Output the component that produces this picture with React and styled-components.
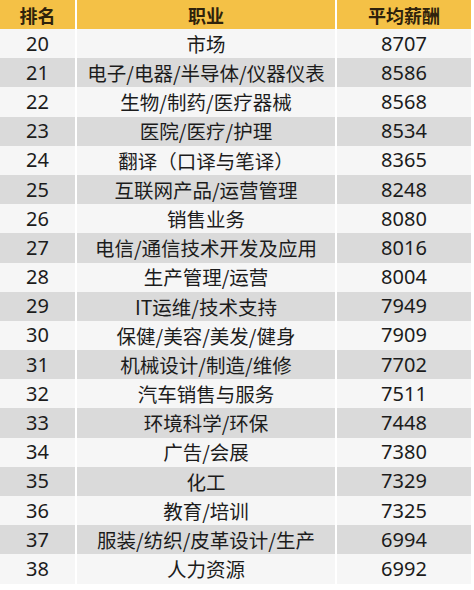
import styled, { createGlobalStyle } from "styled-components"

const GlobalStyle = createGlobalStyle`
  html, body {
    margin: 0;
    padding: 0;
    background: #ffffff;
  }
  body {
    font-family: "Noto Sans", "Noto Sans CJK SC", sans-serif;
    color: #1c1c1c;
  }
`

const rows = [
  ['20', '市场', '8707'],
  ['21', '电子/电器/半导体/仪器仪表', '8586'],
  ['22', '生物/制药/医疗器械', '8568'],
  ['23', '医院/医疗/护理', '8534'],
  ['24', '翻译（口译与笔译）', '8365'],
  ['25', '互联网产品/运营管理', '8248'],
  ['26', '销售业务', '8080'],
  ['27', '电信/通信技术开发及应用', '8016'],
  ['28', '生产管理/运营', '8004'],
  ['29', 'IT运维/技术支持', '7949'],
  ['30', '保健/美容/美发/健身', '7909'],
  ['31', '机械设计/制造/维修', '7702'],
  ['32', '汽车销售与服务', '7511'],
  ['33', '环境科学/环保', '7448'],
  ['34', '广告/会展', '7380'],
  ['35', '化工', '7329'],
  ['36', '教育/培训', '7325'],
  ['37', '服装/纺织/皮革设计/生产', '6994'],
  ['38', '人力资源', '6992'],
]

const Table = styled.div`
  width: 471px;
  display: flex;
  flex-direction: column;
`

const Row = styled.div`
  display: grid;
  grid-template-columns: 75px 258px 1fr;
  column-gap: 2px;
  height: ${p => (p.$head ? '29px' : '29.2px')};
  background: #ffffff;
`

const Cell = styled.div`
  display: flex;
  align-items: center;
  justify-content: center;
  background: ${p => (p.$head ? '#f4c146' : p.$alt ? '#dadada' : '#f6f6f6')};
  font-family: ${p => (p.$num ? '"Noto Sans", sans-serif' : '"Noto Sans CJK SC", sans-serif')};
  font-size: ${p => (p.$head ? '18px' : p.$num ? '20px' : '19.5px')};
  font-weight: ${p => (p.$head ? 700 : 400)};
  color: ${p => (p.$head ? '#2e220c' : '#1c1c1c')};
  white-space: nowrap;
  line-height: 1;
`

export default function App() {
  return (
    <>
      <GlobalStyle />
      <Table>
        <Row $head>
          <Cell $head>排名</Cell>
          <Cell $head>职业</Cell>
          <Cell $head>平均薪酬</Cell>
        </Row>
        {rows.map(([rank, job, pay], i) => (
          <Row key={rank}>
            <Cell $alt={i % 2 === 1} $num>{rank}</Cell>
            <Cell $alt={i % 2 === 1}>{job}</Cell>
            <Cell $alt={i % 2 === 1} $num>{pay}</Cell>
          </Row>
        ))}
      </Table>
    </>
  )
}
